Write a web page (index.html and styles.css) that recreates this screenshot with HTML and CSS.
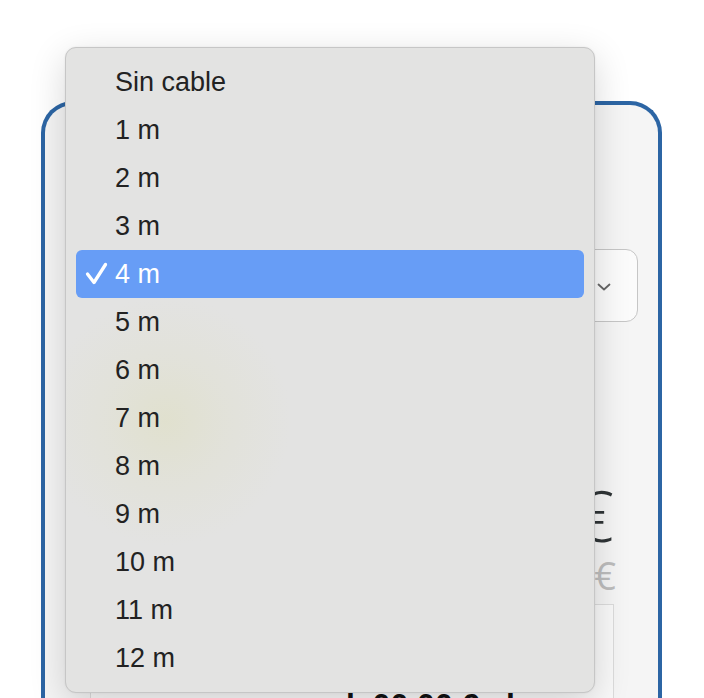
FILE: index.html
```html
<!DOCTYPE html>
<html lang="es">
<head>
<meta charset="utf-8">
<title>Cable</title>
<link rel="stylesheet" href="styles.css">
</head>
<body>
<div class="card">
  <div class="select">
    <span class="select-value">4 m</span>
    <svg class="chevron" width="14" height="8" viewBox="0 0 14 8"><path d="M1.5 1.5 L7 6.5 L12.5 1.5" fill="none" stroke="#666" stroke-width="1.8" stroke-linecap="round" stroke-linejoin="round"/></svg>
  </div>
  <div class="price">00,00 €</div>
  <div class="old-price">00,00 €</div>
  <div class="box">
    <div class="box-text">con pack 00,00 € al mes</div>
  </div>
</div>

<ul class="menu">
  <li class="item">Sin cable</li>
  <li class="item">1 m</li>
  <li class="item">2 m</li>
  <li class="item">3 m</li>
  <li class="item selected"><svg class="check" width="34" height="48" viewBox="0 0 34 48"><path d="M11.5 24 L18 32.5 L29.5 14.5" fill="none" stroke="#fff" stroke-width="3.3" stroke-linecap="round" stroke-linejoin="round"/></svg>4 m</li>
  <li class="item">5 m</li>
  <li class="item">6 m</li>
  <li class="item">7 m</li>
  <li class="item">8 m</li>
  <li class="item">9 m</li>
  <li class="item">10 m</li>
  <li class="item">11 m</li>
  <li class="item">12 m</li>
</ul>
</body>
</html>
```
FILE: styles.css
```css
html, body {
  margin: 0;
  padding: 0;
  background: #ffffff;
  overflow: hidden;
}

body {
  width: 704px;
  height: 698px;
  position: relative;
  font-family: "Open Sans", "Liberation Sans", sans-serif;
}

.card {
  box-sizing: border-box;
  margin: 101px 0 0 41px;
  width: 621px;
  height: 720px;
  border: 4px solid #2c65a4;
  border-bottom: none;
  border-radius: 32px 32px 0 0;
  background: #f5f5f5;
  padding: 144px 44px 0 45px;
}

.select {
  box-sizing: border-box;
  margin: 0 -24px 0 -24px;
  height: 73px;
  border: 1.5px solid #c6c6c6;
  border-radius: 12px;
  background: #fbfbfb;
  display: flex;
  align-items: center;
  justify-content: space-between;
  padding: 0 26px 0 24px;
  font-size: 22px;
  color: #222;
}

.chevron {
  display: block;
  margin-top: 2px;
}

.price {
  margin-top: 156px;
  font-size: 70px;
  line-height: 74px;
  font-weight: 300;
  color: #2f3436;
  text-align: right;
}

.old-price {
  margin-top: 1px;
  margin-right: -2px;
  font-size: 38px;
  line-height: 44px;
  font-weight: 400;
  color: #bdbdbd;
  text-align: right;
}

.box {
  box-sizing: border-box;
  margin-top: 7px;
  height: 200px;
  border: 1.5px solid #dcdcdc;
  background: #f9f9f9;
  padding: 81px 0 0 134px;
}

.box-text {
  font-family: "Liberation Sans", Arial, sans-serif;
  font-size: 32px;
  line-height: 38px;
  font-weight: 700;
  color: #111;
  white-space: nowrap;
}

.menu {
  position: absolute;
  left: 65px;
  top: 47px;
  width: 530px;
  height: 646px;
  box-sizing: border-box;
  margin: 0;
  padding: 10px 10px;
  list-style: none;
  border: 1px solid #c6c6c6;
  border-radius: 11px;
  background:
    radial-gradient(circle at 100px 373px, rgba(224, 224, 204, 0.9) 0, rgba(225, 225, 212, 0.6) 60px, rgba(227, 227, 226, 0) 125px),
    #e3e3e2;
  box-shadow: 0 10px 36px rgba(0, 0, 0, 0.16), 0 0 2px rgba(0, 0, 0, 0.08);
  font-family: "Liberation Sans", Arial, sans-serif;
  font-size: 27px;
  color: #222;
}

.item {
  height: 48px;
  line-height: 48px;
  padding-left: 39px;
  border-radius: 6px;
  position: relative;
  white-space: nowrap;
}

.item.selected {
  background: #679df6;
  color: #ffffff;
}

.check {
  position: absolute;
  left: 0;
  top: 0;
}
```
